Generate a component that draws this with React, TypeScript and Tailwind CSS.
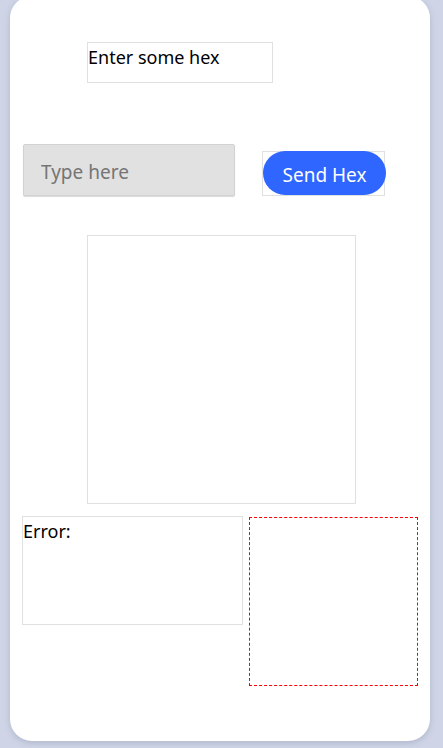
export default function App() {
  const font = { fontFamily: '"Noto Sans", "Open Sans", sans-serif' };
  return (
    <div className="h-[748px] w-[443px] overflow-hidden bg-[#cfd5e6] px-[10px]" style={font}>
      <div className="-mt-1 h-[745px] w-[420px] rounded-[22px] bg-white shadow-[0_2px_6px_rgba(120,130,160,0.35)]">
        <div className="pt-[46px] pl-[77px]">
          <div className="h-[41px] w-[186px] border border-[#e0e0e0] text-[18px] leading-[28px] text-black">
            Enter some hex
          </div>
        </div>

        <div className="mt-[61px] flex items-start pl-[13px]">
          <input
            placeholder="Type here"
            className="h-[52px] w-[212px] rounded-[2px] border border-[#d2d2d2] bg-[#e1e1e1] pl-[17px] pt-[3px] text-[19px] text-[#6b6b6b] placeholder:text-[#757575] shadow-[0_1px_1px_rgba(0,0,0,0.15)] outline-none"
            style={font}
          />
          <div className="ml-[27px] mt-[7px] h-[45px] w-[123px] border border-[#e0e0e0]">
            <button className="-mt-px h-[44px] w-[123px] rounded-full bg-[#2f66ff] pt-[4px] text-[19px] text-white">
              Send Hex
            </button>
          </div>
        </div>

        <div className="mt-[39px] pl-[77px]">
          <div className="h-[269px] w-[269px] border border-[#e0e0e0]" />
        </div>

        <div className="mt-[12px] flex items-start pl-[12px]">
          <div className="h-[109px] w-[221px] border border-[#e0e0e0] text-[18px] leading-[28px] text-black">
            Error:
          </div>
          <div className="ml-[6px] mt-px h-[169px] w-[169px] border border-dashed border-[#ff0000] bg-clip-padding" />
        </div>
      </div>
    </div>
  );
}
